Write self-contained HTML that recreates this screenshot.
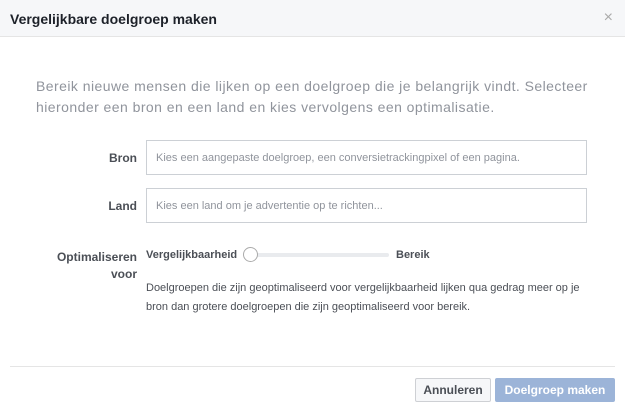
<!DOCTYPE html>
<html><head><meta charset="utf-8"><style>
*{margin:0;padding:0;box-sizing:border-box}
body{width:625px;height:410px;background:#fff;font-family:"Liberation Sans",Helvetica,Arial,sans-serif;position:relative;overflow:hidden;color:#4b4f56}
.hdr{position:absolute;left:0;top:0;width:625px;height:37px;background:#f6f7f9;border-bottom:1px solid #e5e5e5}
.hdr .t{position:absolute;left:10px;top:11px;font-size:14px;font-weight:bold;color:#1d2129}
.hdr .x{position:absolute;right:12px;top:9px;font-size:16px;color:#aaa}
.intro{position:absolute;left:36px;top:76px;width:570px;font-size:14px;line-height:21px;color:#90949c;letter-spacing:0.45px}
.lbl{position:absolute;font-size:12px;font-weight:bold;color:#4b4f56;text-align:right}
.inp{position:absolute;left:146px;width:441px;height:35px;border:1px solid #ccd0d5;font-size:11px;color:#90949c;padding:11px 0 0 9px}
.sl{position:absolute;font-size:11px;font-weight:bold;color:#4b4f56}
.track{position:absolute;left:255px;top:253px;width:134px;height:4px;background:#e9ebee;border-radius:2px}
.knob{position:absolute;left:243px;top:247px;width:15px;height:15px;border:1px solid #aaa;border-radius:50%;background:#fff}
.desc{position:absolute;left:146px;top:279px;width:445px;font-size:11px;line-height:19px;color:#4b4f56}
.sep{position:absolute;left:10px;top:366px;width:605px;border-top:1px solid #e5e5e5}
.btn{position:absolute;top:378px;height:24px;font-size:12px;font-weight:bold;border-radius:2px;text-align:center;line-height:22px}
</style></head><body>
<div class="hdr"><div class="t">Vergelijkbare doelgroep maken</div><div class="x">×</div></div>
<div class="intro">Bereik nieuwe mensen die lijken op een doelgroep die je belangrijk vindt. Selecteer hieronder een bron en een land en kies vervolgens een optimalisatie.</div>
<div class="lbl" style="right:488px;top:151px">Bron</div>
<div class="inp" style="top:140px">Kies een aangepaste doelgroep, een conversietrackingpixel of een pagina.</div>
<div class="lbl" style="right:488px;top:199px">Land</div>
<div class="inp" style="top:188px">Kies een land om je advertentie op te richten...</div>
<div class="lbl" style="right:488px;top:249px;line-height:17px">Optimaliseren<br>voor</div>
<div class="sl" style="left:146px;top:249px">Vergelijkbaarheid</div>
<div class="track"></div><div class="knob"></div>
<div class="sl" style="left:396px;top:249px">Bereik</div>
<div class="desc">Doelgroepen die zijn geoptimaliseerd voor vergelijkbaarheid lijken qua gedrag meer op je bron dan grotere doelgroepen die zijn geoptimaliseerd voor bereik.</div>
<div class="sep"></div>
<div class="btn" style="left:415px;width:76px;background:#f6f7f9;border:1px solid #ced0d4;color:#4b4f56">Annuleren</div>
<div class="btn" style="left:495px;width:120px;background:#9cb4d8;border:1px solid #9cb4d8;color:#fff">Doelgroep maken</div>
</body></html>
